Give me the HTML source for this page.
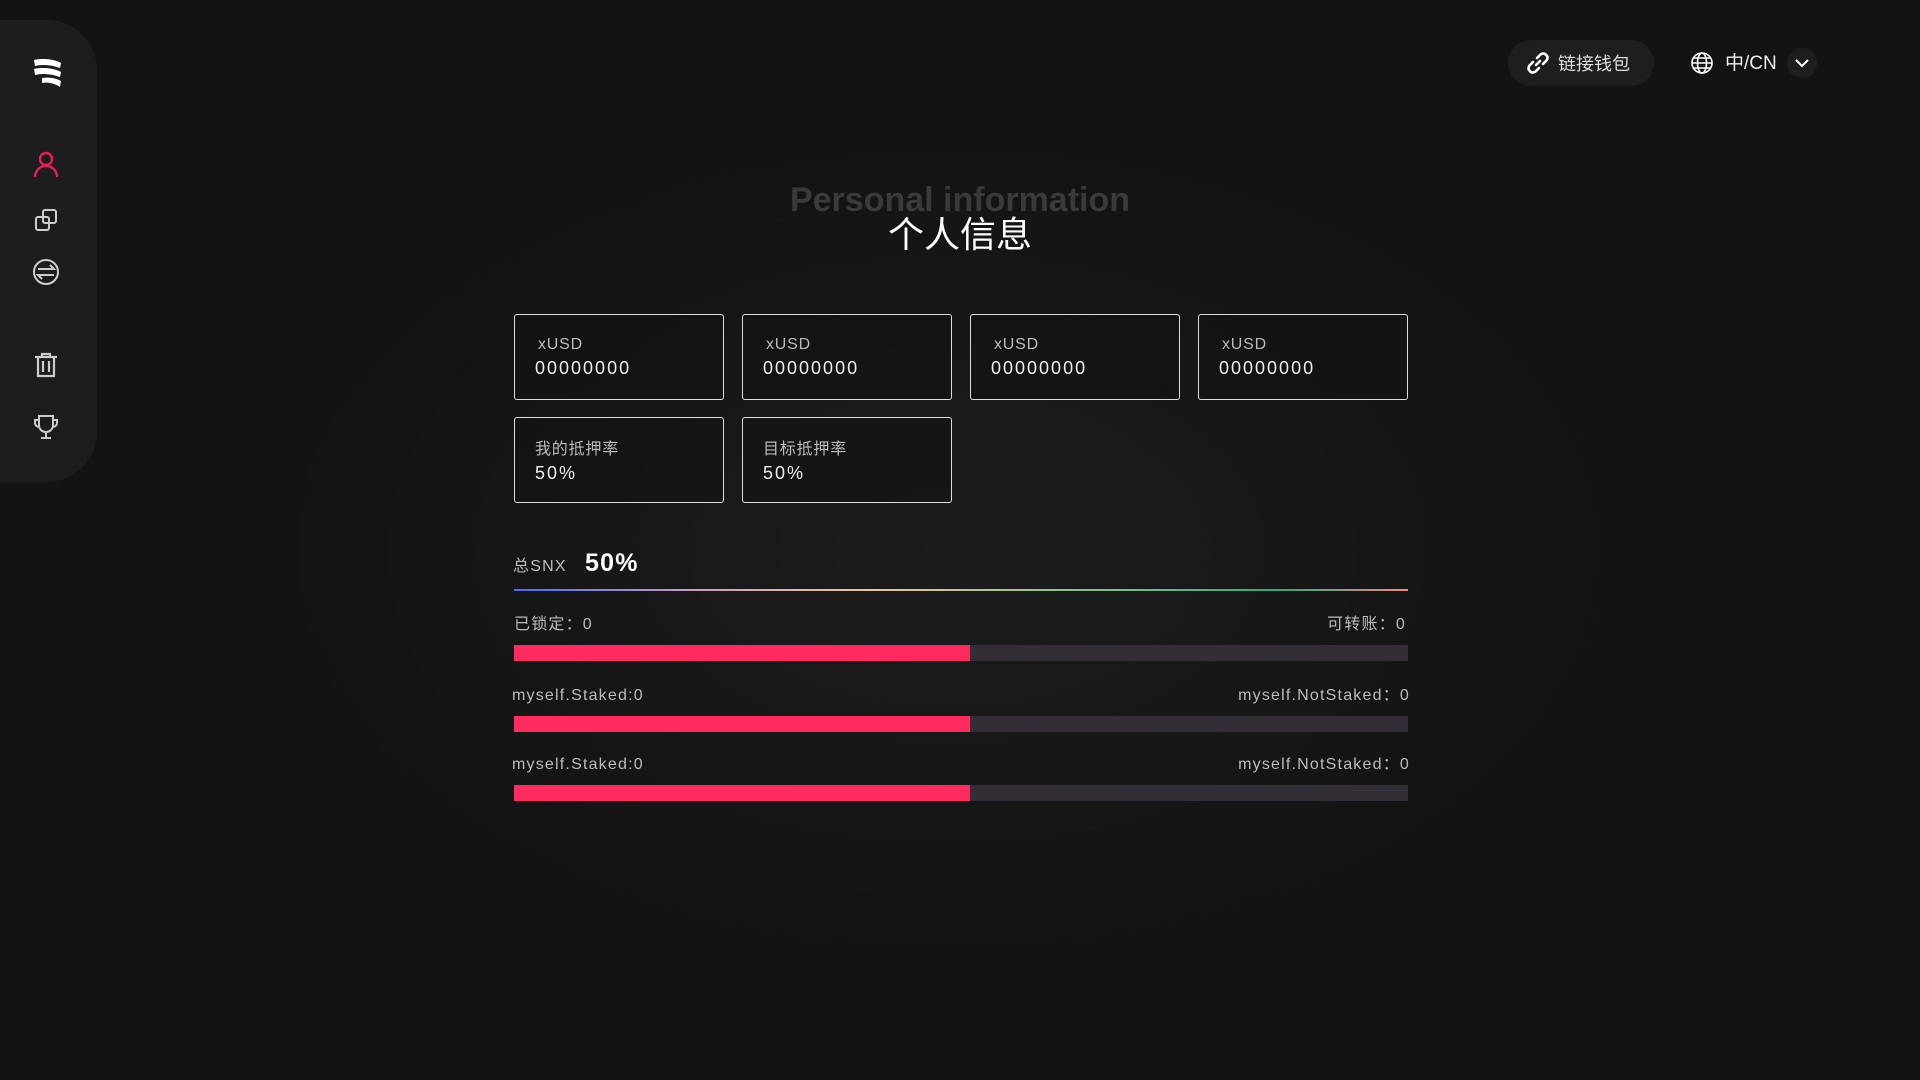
<!DOCTYPE html>
<html><head><meta charset="utf-8"><style>
*{margin:0;padding:0;box-sizing:border-box}
body{width:1920px;height:1080px;background:#141314;font-family:"Liberation Sans","Noto Sans CJK SC",sans-serif;color:#fff;position:relative;overflow:hidden}
.bgglow{position:absolute;left:300px;top:150px;width:1300px;height:800px;background:radial-gradient(ellipse at center,#1c1b1d 0%,#161516 55%,#141314 75%)}
.side{position:absolute;left:0;top:20px;width:97px;height:462px;background:#1d1c1f;border-radius:0 50px 50px 0}
.ic{position:absolute;left:32px}
.top{position:absolute}
.pill{left:1508px;top:40px;width:146px;height:46px;border-radius:23px;background:#1f1d20;display:flex;align-items:center;padding-left:18px;font-size:18px;color:#ddd}
.t1{position:absolute;left:0;width:1920px;text-align:center;top:180px;font-size:34px;font-weight:bold;color:#3a393c;line-height:1.2}
.t2{position:absolute;left:0;width:1920px;text-align:center;top:206px;font-size:36px;color:#fff}
.card{position:absolute;width:210px;height:86px;border:1.5px solid #ddd;border-radius:3px;background:rgba(20,19,20,.6)}
.card .a{position:absolute;left:23px;top:20px;font-size:16px;color:#bbb;letter-spacing:.8px;line-height:1.2}
.card .b{position:absolute;left:20px;top:43px;font-size:18px;color:#eee;letter-spacing:2px;line-height:1.2}
.lbl{position:absolute;font-size:16px;color:#bbb;letter-spacing:1.2px;line-height:20px}
.bar{position:absolute;left:514px;width:894px;height:16px;background:#332e35}
.bar i{display:block;width:456px;height:100%;background:#ff2a5f}
</style></head><body>
<div class="bgglow"></div>
<div class="side">
<svg class="ic" style="top:37px;left:32px" width="30" height="32" viewBox="0 0 30 32"><path d="M2 3 C10 1 22 2 29 6 L28 11 C20 8 10 7 3 9 Z" fill="#fff"/><path d="M2 12 C10 10 22 11 29 15 L28 20 C20 17 10 16 3 18 Z" fill="#fff"/><path d="M10 21 C17 20 24 21 29 24 L28 30 C22 26 15 25 10 26 Z" fill="#fff"/></svg>
<svg class="ic" style="top:130px" width="28" height="28" viewBox="0 0 28 28" fill="none" stroke="#e81e5a" stroke-width="2.4" stroke-linecap="round"><circle cx="14" cy="9" r="6"/><path d="M3 26 C4 19 9 16 14 16 C19 16 24 19 25 26"/></svg>
<svg class="ic" style="top:186px" width="28" height="28" viewBox="0 0 28 28" fill="none" stroke="#ccc" stroke-width="2"><rect x="4" y="11" width="13" height="13" rx="2"/><rect x="11" y="4" width="13" height="13" rx="2"/></svg>
<svg class="ic" style="top:238px" width="28" height="28" viewBox="0 0 28 28" fill="none" stroke="#ccc" stroke-width="2"><circle cx="14" cy="14" r="12"/><path d="M6 11H22L18 7M22 17H6L10 21"/></svg>
<svg class="ic" style="top:331px" width="28" height="28" viewBox="0 0 28 28" fill="none" stroke="#ccc" stroke-width="2.2"><path d="M3 6H25M10 6V3H18V6M6 6V25H22V6M11 10V21M17 10V21"/></svg>
<svg class="ic" style="top:393px" width="28" height="28" viewBox="0 0 28 28" fill="none" stroke="#ccc" stroke-width="2"><path d="M7 3H21V12C21 16 18 19 14 19C10 19 7 16 7 12Z M7 7H3V10C3 12 5 14 7 14M21 7H25V10C25 12 23 14 21 14M14 19V24M9 25H19"/></svg>
</div>
<div class="top pill"><svg width="24" height="24" viewBox="0 0 24 24" fill="none" stroke="#fff" stroke-width="2.6" stroke-linecap="round"><path d="M10 14 L14 10"/><path d="M11 7 L14 4 C16 2 19 2 20 4 C22 5 22 8 20 10 L17 13"/><path d="M13 17 L10 20 C8 22 5 22 4 20 C2 19 2 16 4 14 L7 11"/></svg><span style="margin-left:8px">链接钱包</span></div>
<svg class="top" style="left:1690px;top:51px" width="24" height="24" viewBox="0 0 24 24" fill="none" stroke="#fff" stroke-width="1.6"><circle cx="12" cy="12" r="10"/><ellipse cx="12" cy="12" rx="4.5" ry="10"/><path d="M2 12H22M4 7H20M4 17H20"/></svg>
<div class="top" style="left:1725px;top:52px;font-size:19px;color:#eee;line-height:24px">中/CN</div>
<div class="top" style="left:1787px;top:48px;width:30px;height:30px;border-radius:15px;background:#1f1d20"><svg width="30" height="30" viewBox="0 0 30 30" fill="none" stroke="#fff" stroke-width="2"><path d="M9 12L15 18L21 12"/></svg></div>
<div class="t1">Personal information</div>
<div class="t2">个人信息</div>
<div class="card" style="left:514px;top:314px"><div class="a">xUSD</div><div class="b">00000000</div></div>
<div class="card" style="left:742px;top:314px"><div class="a">xUSD</div><div class="b">00000000</div></div>
<div class="card" style="left:970px;top:314px"><div class="a">xUSD</div><div class="b">00000000</div></div>
<div class="card" style="left:1198px;top:314px"><div class="a">xUSD</div><div class="b">00000000</div></div>
<div class="card" style="left:514px;top:417px"><div class="a" style="left:20px;top:22px">我的抵押率</div><div class="b" style="top:45px">50%</div></div>
<div class="card" style="left:742px;top:417px"><div class="a" style="left:20px;top:22px">目标抵押率</div><div class="b" style="top:45px">50%</div></div>
<div class="lbl" style="left:513px;top:557px">总SNX</div>
<div class="lbl" style="left:585px;top:548px;font-size:25px;font-weight:bold;color:#fff;line-height:30px">50%</div>
<div style="position:absolute;left:514px;top:589px;width:894px;height:2px;background:linear-gradient(90deg,#4a6cf7,#c8a0c0 20%,#e8c89a 40%,#6fbf8a 70%,#2fa87a 85%,#f08a8a)"></div>
<div class="lbl" style="left:514px;top:615px">已锁定：0</div>
<div class="lbl" style="right:514px;top:615px">可转账：0</div>
<div class="bar" style="top:645px"><i></i></div>
<div class="lbl" style="left:512px;top:686px">myself.Staked:0</div>
<div class="lbl" style="right:510px;top:686px">myself.NotStaked：0</div>
<div class="bar" style="top:716px"><i></i></div>
<div class="lbl" style="left:512px;top:755px">myself.Staked:0</div>
<div class="lbl" style="right:510px;top:755px">myself.NotStaked：0</div>
<div class="bar" style="top:785px"><i></i></div>
</body></html>
